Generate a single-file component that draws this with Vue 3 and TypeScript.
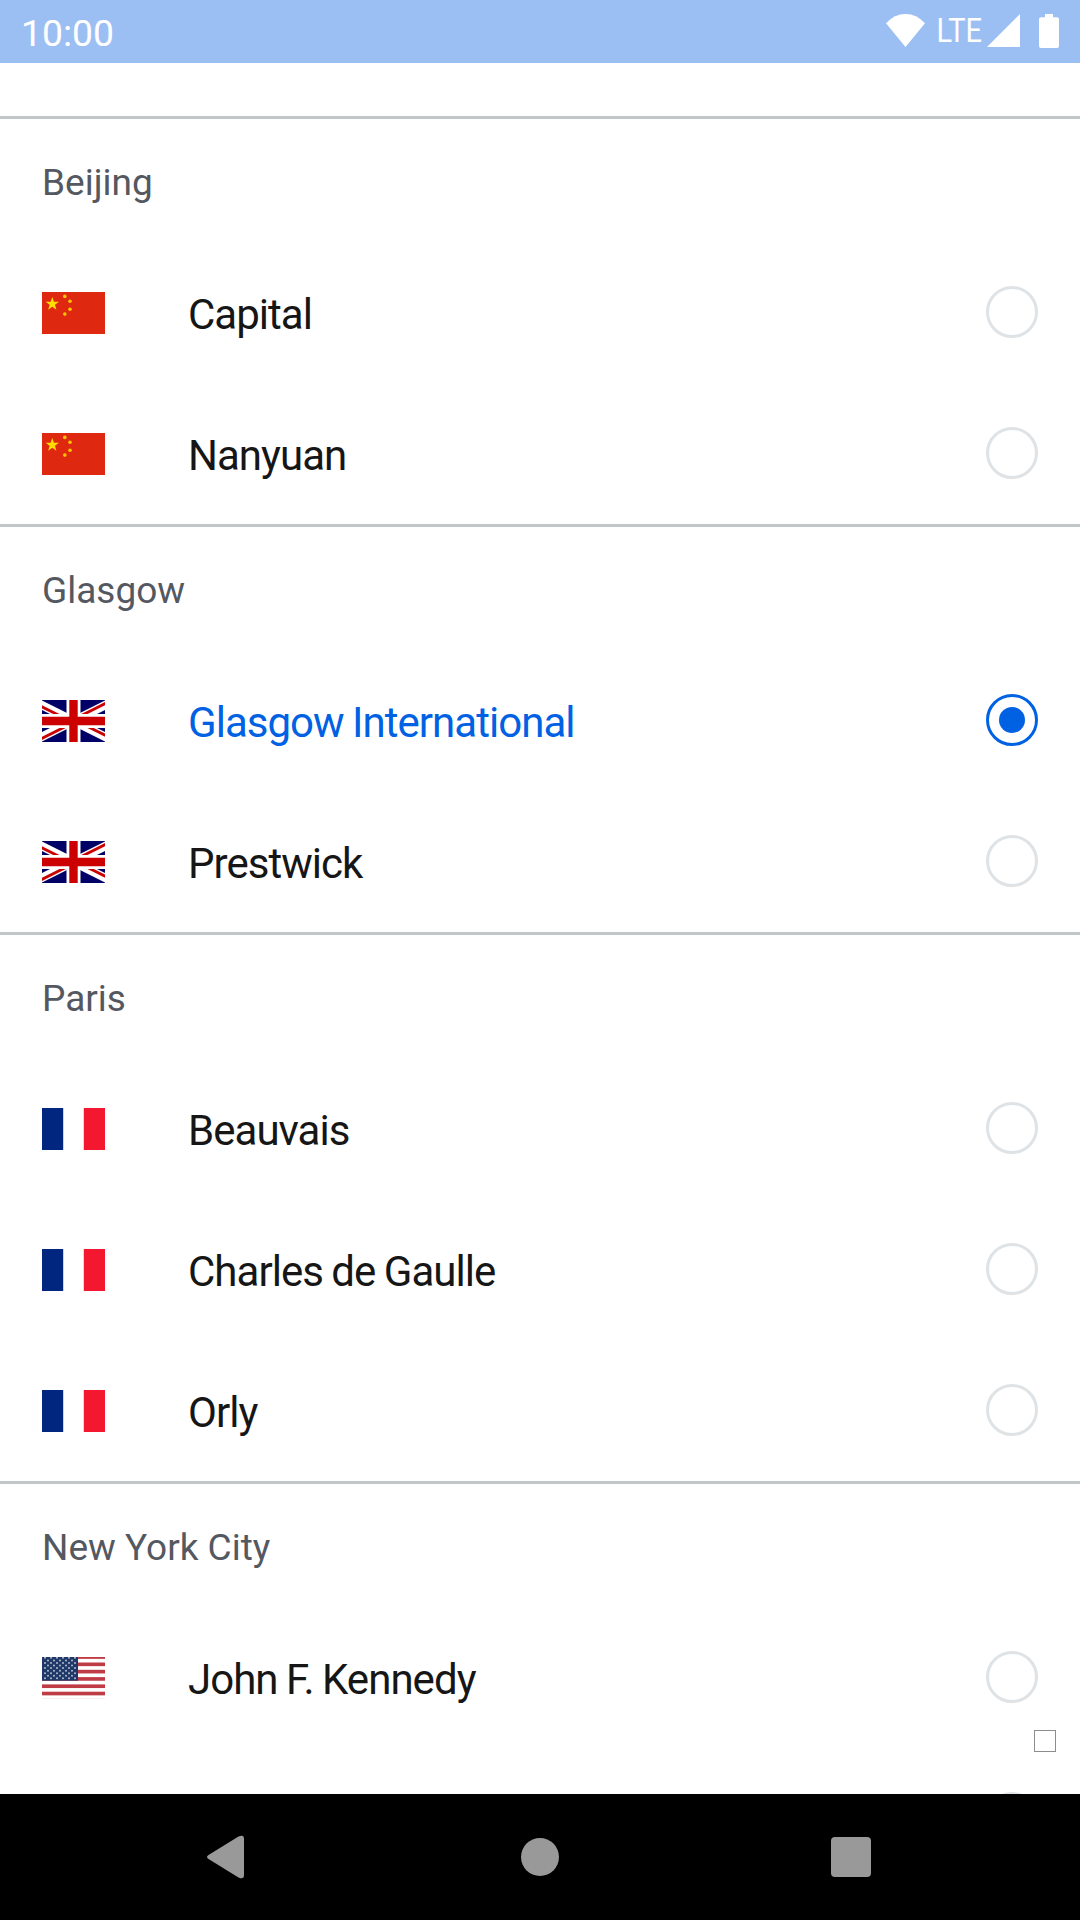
<script setup lang="ts">
type Country = 'cn' | 'gb' | 'fr' | 'us'

interface Airport {
  name: string
  selected?: boolean
}

interface City {
  name: string
  country: Country
  airports: Airport[]
}

const cities: City[] = [
  { name: 'Beijing', country: 'cn', airports: [{ name: 'Capital' }, { name: 'Nanyuan' }] },
  {
    name: 'Glasgow',
    country: 'gb',
    airports: [{ name: 'Glasgow International', selected: true }, { name: 'Prestwick' }],
  },
  {
    name: 'Paris',
    country: 'fr',
    airports: [{ name: 'Beauvais' }, { name: 'Charles de Gaulle' }, { name: 'Orly' }],
  },
  { name: 'New York City', country: 'us', airports: [{ name: 'John F. Kennedy' }] },
]

function star(cx: number, cy: number, r: number): string {
  return Array.from({ length: 10 }, (_, i) => {
    const radius = i % 2 === 0 ? r : r * 0.4
    const angle = (Math.PI / 5) * i - Math.PI / 2
    return `${(cx + radius * Math.cos(angle)).toFixed(2)},${(cy + radius * Math.sin(angle)).toFixed(2)}`
  }).join(' ')
}

const bigStar = star(10.3, 12, 7)
const smallStars: [number, number][] = [
  [22.8, 4.4],
  [28, 9.2],
  [28, 17.3],
  [22.8, 22.1],
]

const stripes = [-1.8, 5.5, 12.8, 20.1, 27.4, 34.7]

const unionStars: { x: number; y: number }[] = []
for (let row = 0; row < 9; row++) {
  const count = row % 2 === 0 ? 6 : 5
  for (let i = 0; i < count; i++) {
    unionStars.push({ x: (row % 2 === 0 ? 3 : 6) + i * 6, y: 0.85 + row * 2.56 })
  }
}
</script>

<template>
  <div class="screen">
    <header class="status">
      <span class="clock">10:00</span>
      <svg class="status-icons" width="180" height="63" viewBox="880 0 180 63">
        <path d="M886 23.2Q894.5 14 905.5 14T925 23.2L905.5 47Z" fill="#fff" />
        <text x="936.5" y="42.4" class="lte" textLength="45.5" lengthAdjust="spacingAndGlyphs">LTE</text>
        <path d="M1020 14V47H987Z" fill="#fff" />
        <path
          d="M1045 14H1053V17.3H1057Q1059 17.3 1059 19.3V46Q1059 48 1057 48H1041Q1039 48 1039 46V19.3Q1039 17.3 1041 17.3H1045Z"
          fill="#fff"
        />
      </svg>
    </header>

    <main class="list">
      <section v-for="city in cities" :key="city.name" class="city">
        <h2 class="city-name">{{ city.name }}</h2>
        <div v-for="airport in city.airports" :key="airport.name" class="row">
          <svg v-if="city.country === 'cn'" class="flag" viewBox="0 0 63 42">
            <rect width="63" height="42" fill="#de2910" />
            <polygon :points="bigStar" fill="#ffde00" />
            <circle v-for="(s, i) in smallStars" :key="i" :cx="s[0]" :cy="s[1]" r="1.8" fill="#ffc400" />
          </svg>
          <svg v-else-if="city.country === 'gb'" class="flag" viewBox="-128 0 768 512">
            <path d="M-256 0H768V512H-256Z" fill="#006" />
            <path
              d="M-256 0V57.2L653.5 512H768V454.8L-141.5 0ZM768 0V57.3L-141.5 512H-256V454.8L653.5 0Z"
              fill="#fff"
            />
            <path d="M170.7 0V512H341.3V0ZM-256 170.7V341.3H768V170.7Z" fill="#fff" />
            <path
              d="M-256 204.8V307.2H768V204.8ZM204.8 0V512H307.2V0ZM-256 512L85.3 341.3H161.7L-179.7 512ZM-256 0L85.3 170.7H9L-256 38.2ZM350.4 170.7L691.7 0H768L426.7 170.7ZM768 512L426.7 341.3H503L768 473.8Z"
              fill="#c00"
            />
          </svg>
          <svg v-else-if="city.country === 'fr'" class="flag" viewBox="0 0 63 42">
            <rect width="63" height="42" fill="#fff" />
            <rect width="21.2" height="42" fill="#00267f" />
            <rect x="41.8" width="21.2" height="42" fill="#f31830" />
          </svg>
          <svg v-else class="flag" viewBox="0 0 63 42">
            <rect width="63" height="42" fill="#fff" />
            <rect v-for="y in stripes" :key="y" :y="y" width="63" height="3.65" fill="#bf3b45" />
            <rect y="41" width="63" height="1" fill="#fbeeee" />
            <rect width="36" height="23.7" fill="#1f3868" />
            <circle v-for="(s, i) in unionStars" :key="i" :cx="s.x" :cy="s.y" r="1" fill="#b4bdce" />
          </svg>
          <span class="airport" :class="{ selected: airport.selected }">{{ airport.name }}</span>
          <span class="radio" :class="{ checked: airport.selected }"></span>
        </div>
        <div v-if="city.country === 'us'" class="row">
          <span class="radio"></span>
        </div>
      </section>
      <span class="marker"></span>
    </main>

    <nav class="navbar">
      <svg width="1080" height="126" viewBox="0 0 1080 126">
        <path
          d="M208.5 61L238.5 42.6Q244 40 244 45V81Q244 86 238.5 83.4L208.5 65Q205.5 63 208.5 61Z"
          fill="#999"
        />
        <circle cx="540" cy="63" r="19" fill="#999" />
        <rect x="831" y="43" width="40" height="40" rx="4" fill="#999" />
      </svg>
    </nav>
  </div>
</template>

<style>
body {
  margin: 0;
}
</style>

<style scoped>
.screen {
  display: flex;
  flex-direction: column;
  width: 1080px;
  height: 1920px;
  overflow: hidden;
  background: #fff;
  font-family: Roboto, sans-serif;
}

.status {
  display: flex;
  flex: none;
  justify-content: space-between;
  height: 63px;
  padding: 0 20px 0 21px;
  background: #9cbff3;
}

.clock {
  padding-top: 2px;
  color: #fff;
  font-size: 37.3px;
  line-height: 62px;
}

.status-icons {
  display: block;
}

.lte {
  fill: #fff;
  font-size: 32.5px;
}

.list {
  position: relative;
  flex: 1;
  min-height: 0;
  padding-top: 53px;
  overflow: hidden;
}

.city {
  border-top: 3px solid #c1c7c9;
}

.city-name {
  box-sizing: border-box;
  height: 123px;
  margin: 0;
  padding: 43px 0 0 42px;
  color: #545860;
  font-size: 37px;
  font-weight: 400;
  line-height: 42px;
}

.row {
  display: flex;
  align-items: flex-start;
  box-sizing: border-box;
  height: 141px;
  padding: 44px 42px 0;
}

.flag {
  display: block;
  flex: none;
  width: 63px;
  height: 42px;
  margin-top: 6px;
}

.airport {
  margin: 4px 0 0 83px;
  color: #161616;
  font-size: 42px;
  letter-spacing: -0.97px;
  word-spacing: -1px;
  line-height: 50px;
}

.airport.selected {
  color: #0062e3;
}

.radio {
  display: flex;
  align-items: center;
  justify-content: center;
  box-sizing: border-box;
  flex: none;
  width: 52px;
  height: 52px;
  margin-left: auto;
  border: 3px solid #dfe3e5;
  border-radius: 50%;
}

.radio.checked {
  border-color: #0062e3;
}

.radio.checked::after {
  width: 26px;
  height: 26px;
  border-radius: 50%;
  background: #0062e3;
  content: '';
}

.marker {
  position: absolute;
  top: 1667px;
  left: 1034px;
  box-sizing: border-box;
  width: 22px;
  height: 22px;
  border: 1px solid #8d8d8d;
}

.navbar {
  flex: none;
  height: 126px;
  background: #000;
}

.navbar svg {
  display: block;
}
</style>
